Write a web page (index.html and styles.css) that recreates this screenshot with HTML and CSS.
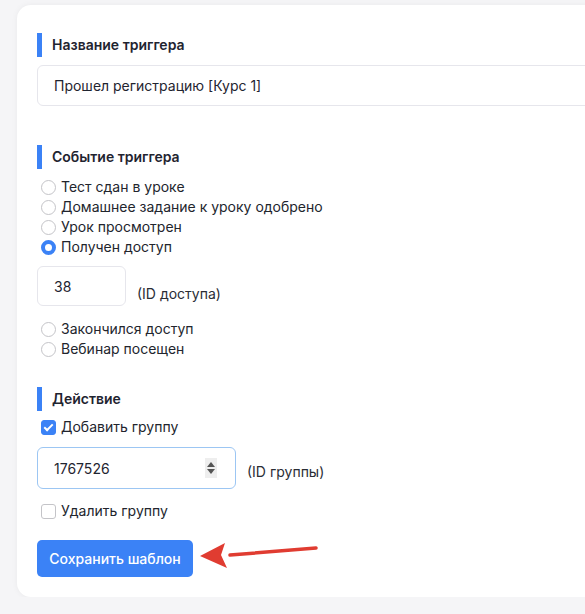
FILE: index.html
```html
<!DOCTYPE html>
<html lang="ru">
<head>
  <meta charset="UTF-8" />
  <title>Шаблон триггера</title>
  <link rel="stylesheet" href="styles.css">
</head>
<body>

<div class="card">
  <div class="section">
    <div class="sec-title">Название триггера</div>
    <div class="field wide">Прошел регистрацию [Курс 1]</div>
  </div>

  <div class="section mid">
    <div class="sec-title">Событие триггера</div>
    <div class="options">
      <label class="opt"><span class="radio"></span>Тест сдан в уроке</label>
      <label class="opt"><span class="radio"></span>Домашнее задание к уроку одобрено</label>
      <label class="opt"><span class="radio"></span>Урок просмотрен</label>
      <label class="opt"><span class="radio on"></span>Получен доступ</label>
    </div>
    <div class="id-row first">
      <div class="field small">38</div>
      <span class="id-note">(ID доступа)</span>
    </div>
    <div class="options after">
      <label class="opt"><span class="radio"></span>Закончился доступ</label>
      <label class="opt"><span class="radio"></span>Вебинар посещен</label>
    </div>
  </div>

  <div class="section last">
    <div class="sec-title">Действие</div>
    <div class="options">
      <label class="opt"><span class="check on"></span>Добавить группу</label>
    </div>
    <div class="id-row second">
      <div class="field num">1767526<span class="spin"></span></div>
      <span class="id-note">(ID группы)</span>
    </div>
    <div class="options after2">
      <label class="opt"><span class="check"></span>Удалить группу</label>
    </div>
    <div class="btn-row">
      <button class="save">Сохранить шаблон</button>
      <svg class="arrow" width="130" height="34" viewBox="0 0 130 34">
        <path d="M118 8 L32 15" stroke="#e03c31" stroke-width="3.5" stroke-linecap="round" fill="none"/>
        <path d="M2 16 L27 3 L23 15 L29 28 Z" fill="#e03c31"/>
      </svg>
    </div>
  </div>
</div>

</body>
</html>
```

FILE: styles.css
```css
body {
  margin: 0;
  padding: 5px 0 0 17px;
  background: #f5f5f7;
  font-family: Inter, "Noto Sans", sans-serif;
  color: #1f2430;
  overflow: hidden;
}
.card {
  width: 720px;
  background: #fff;
  border-radius: 14px;
  padding: 28px 20px 20px 20px;
  box-shadow: 0 0 6px rgba(0,0,0,0.05);
}
.section {
  margin-bottom: 39px;
}
.section.mid {
  margin-bottom: 29px;
}
.section.last {
  margin-bottom: 0;
}
.sec-title {
  border-left: 5px solid #3b82f6;
  height: 24px;
  line-height: 24px;
  padding-left: 10px;
  font-size: 14px;
  font-weight: 600;
}
.field {
  border: 1px solid #e6e6ec;
  border-radius: 6px;
  box-sizing: border-box;
  font-size: 14px;
  display: flex;
  align-items: center;
  padding-left: 16px;
}
.field.wide {
  height: 41px;
  width: 100%;
  margin-top: 8px;
}
.field.small {
  height: 40px;
  width: 89px;
}
.field.num {
  height: 42px;
  width: 199px;
  border-color: #9cc6f3;
  position: relative;
}
.spin {
  position: absolute;
  left: 167px;
  top: 10px;
  width: 12px;
  height: 20px;
  background: #eeeeee;
}
.spin::before, .spin::after {
  content: "";
  position: absolute;
  left: 2px;
  border-left: 4px solid transparent;
  border-right: 4px solid transparent;
}
.spin::before {
  top: 4px;
  border-bottom: 5px solid #555;
}
.spin::after {
  bottom: 4px;
  border-top: 5px solid #555;
}
.options {
  display: flex;
  flex-direction: column;
}
.opt {
  display: flex;
  align-items: center;
  height: 20px;
  font-size: 14px;
  color: #22252d;
}
.radio, .check {
  width: 15px;
  height: 15px;
  box-sizing: border-box;
  border: 1px solid #c4c4c8;
  margin: 2px 5px 0 4px;
  flex-shrink: 0;
}
.radio {
  border-radius: 50%;
}
.radio.on {
  border: 4px solid #3b82f6;
  background: #fff;
}
.check {
  border-radius: 3px;
}
.check.on {
  background: #3b82f6;
  border-color: #3b82f6;
  position: relative;
}
.check.on::after {
  content: "";
  position: absolute;
  left: 4px;
  top: 1px;
  width: 3px;
  height: 7px;
  border: solid #fff;
  border-width: 0 2px 2px 0;
  transform: rotate(45deg);
}
.sec-title + .options {
  margin-top: 7px;
}
.section.last .sec-title + .options {
  margin-top: 5px;
}
.id-row {
  display: flex;
  align-items: flex-end;
  gap: 11px;
  margin-top: 10px;
}
.id-row.first .id-note {
  padding-bottom: 4px;
}
.id-row.second {
  margin-top: 11px;
}
.id-row.second .id-note {
  padding-bottom: 9px;
}
.id-note {
  font-size: 14px;
  color: #2a2d35;
}
.options.after {
  margin-top: 12px;
}
.options.after2 {
  margin-top: 11px;
}
.btn-row {
  display: flex;
  align-items: center;
  margin-top: 20px;
  position: relative;
}
.save {
  background: #3b82f6;
  color: #fff;
  border: none;
  border-radius: 5px;
  height: 37px;
  width: 156px;
  font-family: Inter, "Noto Sans", sans-serif;
  font-size: 14px;
  font-weight: 500;
  cursor: pointer;
}
.arrow {
  position: absolute;
  left: 161px;
  top: 0px;
}
```
